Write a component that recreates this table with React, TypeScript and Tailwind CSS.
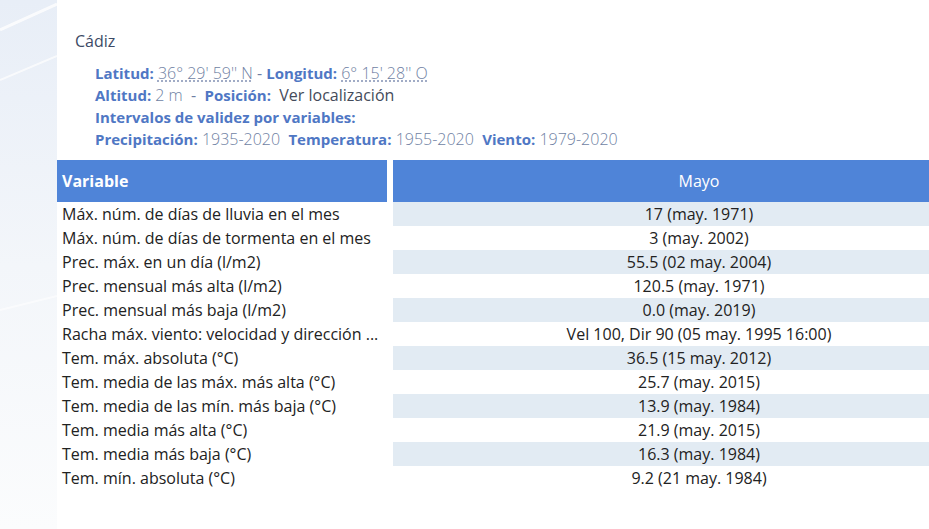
const rows: [string, string][] = [
  ['Máx. núm. de días de lluvia en el mes', '17 (may. 1971)'],
  ['Máx. núm. de días de tormenta en el mes', '3 (may. 2002)'],
  ['Prec. máx. en un día (l/m2)', '55.5 (02 may. 2004)'],
  ['Prec. mensual más alta (l/m2)', '120.5 (may. 1971)'],
  ['Prec. mensual más baja (l/m2)', '0.0 (may. 2019)'],
  ['Racha máx. viento: velocidad y dirección ...', 'Vel 100, Dir 90 (05 may. 1995 16:00)'],
  ['Tem. máx. absoluta (°C)', '36.5 (15 may. 2012)'],
  ['Tem. media de las máx. más alta (°C)', '25.7 (may. 2015)'],
  ['Tem. media de las mín. más baja (°C)', '13.9 (may. 1984)'],
  ['Tem. media más alta (°C)', '21.9 (may. 2015)'],
  ['Tem. media más baja (°C)', '16.3 (may. 1984)'],
  ['Tem. mín. absoluta (°C)', '9.2 (21 may. 1984)'],
];

function Label({ children }: { children: React.ReactNode }) {
  return <span className="text-[15px] font-bold text-[#4f77c4]">{children}</span>;
}

function Value({ children }: { children: React.ReactNode }) {
  return <span className="text-[16px] font-light text-[#6f7fa3]">{children}</span>;
}

export default function App() {
  return (
    <div className="flex min-h-[529px] overflow-hidden bg-white text-[16px] leading-[22px]" style={{ fontFamily: '"Open Sans", "Noto Sans", sans-serif' }}>
      <div className="relative w-[57px] shrink-0 overflow-hidden bg-gradient-to-b from-[#e8eef7] via-[#f3f6fa] to-[#fbfcfd]">
        <svg className="absolute inset-0" width="57" height="529" viewBox="0 0 57 529">
          <path d="M0 30 L57 4" stroke="#ffffff" strokeWidth="3" opacity="0.8" />
          <path d="M0 80 L57 56" stroke="#ffffff" strokeWidth="2" opacity="0.7" />
          <path d="M0 310 L57 296" stroke="#ffffff" strokeWidth="2" opacity="0.6" />
        </svg>
      </div>

      <div className="min-w-0 flex-1 overflow-hidden pt-[30px]">
        <div className="pl-[18px] text-[#3d4a66]">Cádiz</div>

        <div className="mt-[10px] pl-[38px]">
          <div>
            <Label>Latitud:</Label>{' '}
            <abbr className="text-[16px] font-light text-[#6f7fa3] underline decoration-dotted decoration-[#8a98b8] underline-offset-2">36° 29' 59'' N</abbr>
            <span className="text-[#6f7fa3]"> - </span>
            <Label>Longitud:</Label>{' '}
            <abbr className="text-[16px] font-light text-[#6f7fa3] underline decoration-dotted decoration-[#8a98b8] underline-offset-2">6° 15' 28'' O</abbr>
          </div>
          <div>
            <Label>Altitud:</Label> <Value>2 m</Value>
            <span className="text-[#6f7fa3]">&nbsp; - &nbsp;</span>
            <Label>Posición:</Label>
            <span className="text-[#444b5a]">&nbsp; Ver localización</span>
          </div>
          <div>
            <Label>Intervalos de validez por variables:</Label>
          </div>
          <div>
            <Label>Precipitación:</Label> <Value>1935-2020</Value>&nbsp;{' '}
            <Label>Temperatura:</Label> <Value>1955-2020</Value>&nbsp;{' '}
            <Label>Viento:</Label> <Value>1979-2020</Value>
          </div>
        </div>

        <div className="mt-[10px] grid w-[948px] grid-cols-[330px_612px] gap-x-[6px] leading-[24px]">
          <div className="flex h-[42px] items-center bg-[#4f84d8] px-[5px] font-bold text-white">Variable</div>
          <div className="flex h-[42px] items-center justify-center bg-[#4f84d8] text-white">Mayo</div>
          {rows.map(([name, value], i) => (
            <div key={name} className="contents">
              <div className="h-[24px] whitespace-nowrap px-[5px] text-[#222222]">{name}</div>
              <div className={`h-[24px] text-center text-[#222222] ${i % 2 === 0 ? 'bg-[#e2ebf3]' : ''}`}>{value}</div>
            </div>
          ))}
        </div>
      </div>
    </div>
  );
}
